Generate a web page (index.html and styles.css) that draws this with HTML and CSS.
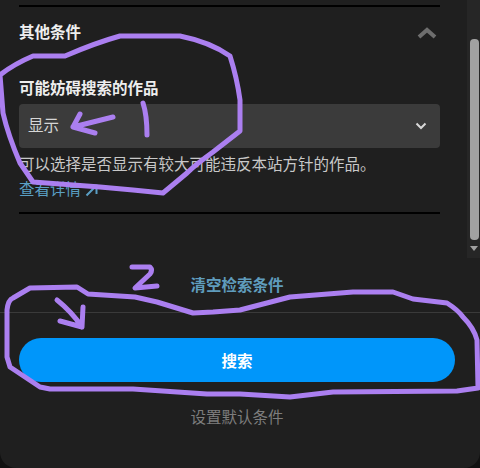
FILE: index.html

```html
<!DOCTYPE html>
<html lang="zh-CN">
<head>
    <meta charset="UTF-8">
    <title>搜索条件</title>
    <link rel="stylesheet" href="styles.css">
</head>
<body>
    <div class="dialog">
        <div class="scroll-area">
            <div class="filters">
                <div class="section">
                    <div class="section-head">
                        <h3>其他条件</h3>
                        <svg class="chevron-up" width="22" height="14" viewBox="0 0 22 14">
                            <path d="M3 11 L11 4 L19 11" fill="none" stroke="#6e6e6e" stroke-width="4"/>
                        </svg>
                    </div>
                    <div class="label">可能妨碍搜索的作品</div>
                    <div class="select">
                        <span>显示</span>
                        <svg width="12" height="8" viewBox="0 0 12 8">
                            <path d="M1.5 1.5 L6 6 L10.5 1.5" fill="none" stroke="#d8d8d8" stroke-width="2"/>
                        </svg>
                    </div>
                    <p class="help">可以选择是否显示有较大可能违反本站方针的作品。</p>
                    <a class="more">查看详情
                        <svg width="13" height="13" viewBox="0 0 13 13">
                            <path d="M3 1.5 H11.5 V10 M11.5 1.5 L1.5 11.5" fill="none" stroke="#5a9fc4" stroke-width="2"/>
                        </svg>
                    </a>
                </div>
            </div>
            <div class="scrollbar">
                <div class="thumb"></div>
                <div class="arrow-down"></div>
            </div>
        </div>
        <div class="clear"><a>清空检索条件</a></div>
        <div class="footer">
            <button class="search">搜索</button>
            <a class="defaults">设置默认条件</a>
        </div>
    </div>

    <!-- hand drawn marks on top of the screenshot -->
    <svg class="marks" width="480" height="468" viewBox="0 0 480 468">
        <g fill="none" stroke="#ab7ff0" stroke-width="5" stroke-linecap="round" stroke-linejoin="round">
            <path d="M0 75 Q14 64 33 56 L65 56 Q95 43 120 36 L180 36 Q210 42 230 56 Q237 78 240 100 L240 131 L213 152 Q195 165 187 173 L163 193 L133 190 L100 187 L33 182 L20 163 Q8 135 3 113 Z"/>
            <path d="M143 103 Q147 115 147 135"/>
            <path d="M113 117 L73 127 L95 133 M80 114 L73 127"/>
            <path d="M132 267 L150 267 Q153 270 150 274 L135 288 L157 286"/>
            <path d="M57 300 Q72 312 82 327 L83 307 M60 321 L82 327"/>
            <path d="M7 310 Q8 300 13 298 L30 288 L77 287 L88 294 L135 297 L157 302 L193 313 L213 312 L240 310 L290 297 L353 292 L393 292 L413 299 L447 303 Q458 310 463 317 Q474 328 477 340 L478 388 L457 391 L333 392 L290 397 L240 394 L207 394 L133 389 L50 389 L40 387 L10 367 L7 357 Z"/>
        </g>
    </svg>
</body>
</html>
```

FILE: styles.css

```css
body {
    margin: 0;
    background-color: #111;
    font-family: "Liberation Sans", "Noto Sans CJK SC", sans-serif;
    font-size: 15.5px;
    line-height: 20px;
}
a {
    cursor: pointer;
}
.dialog {
    width: 480px;
    height: 468px;
    background-color: #1f1f1f;
    border-radius: 0 0 16px 16px;
    overflow: hidden;
}
.scroll-area {
    display: flex;
    height: 258px;
}
.filters {
    width: 421px;
    padding: 5px 0 0 19px;
}
.section {
    height: 205px;
    border-top: 2px solid #000;
    border-bottom: 2px solid #000;
}
.section-head {
    display: flex;
    justify-content: space-between;
    align-items: center;
    height: 50px;
    padding-top: 1px;
    margin-bottom: 21px;
}
.section-head h3 {
    margin: 0;
    font-size: 15.5px;
    color: #eee;
}
.chevron-up {
    margin-right: 2px;
}
.label {
    font-weight: bold;
    color: #eee;
    margin-bottom: 5px;
}
.select {
    display: flex;
    justify-content: space-between;
    align-items: center;
    height: 44px;
    padding: 0 13px 0 9px;
    background-color: #3b3b3b;
    border-radius: 4px;
    color: #d6d6d6;
}
.help {
    margin: 7px 0 0;
    color: #c8c8c8;
    white-space: nowrap;
}
.more {
    display: inline-flex;
    align-items: center;
    gap: 4px;
    margin-top: 5px;
    color: #5a9fc4;
}
.scrollbar {
    position: relative;
    width: 13px;
    margin-left: 27px;
    background-color: #262626;
}
.thumb {
    position: absolute;
    top: 39px;
    left: 3px;
    width: 9px;
    height: 201px;
    background-color: #a1a1a1;
    border-radius: 4px;
}
.arrow-down {
    position: absolute;
    top: 246px;
    left: 3px;
    border-top: 5px solid #a1a1a1;
    border-left: 4px solid transparent;
    border-right: 4px solid transparent;
}
.clear {
    height: 55px;
    padding-top: 18px;
    box-sizing: border-box;
    border-bottom: 1px solid #3a3a3a;
    text-align: center;
    font-weight: bold;
    color: #5f9cbd;
    padding-right: 6px;
}
.footer {
    display: flex;
    flex-direction: column;
    align-items: center;
    padding: 25px 25px 0 19px;
}
.search {
    width: 100%;
    height: 44px;
    border: none;
    border-radius: 22px;
    background-color: #0096fa;
    color: #fff;
    font: bold 15.5px "Liberation Sans", "Noto Sans CJK SC", sans-serif;
}
.defaults {
    margin-top: 26px;
    color: #7d7d7d;
}
.marks {
    position: absolute;
    top: 0;
    left: 0;
}
```
